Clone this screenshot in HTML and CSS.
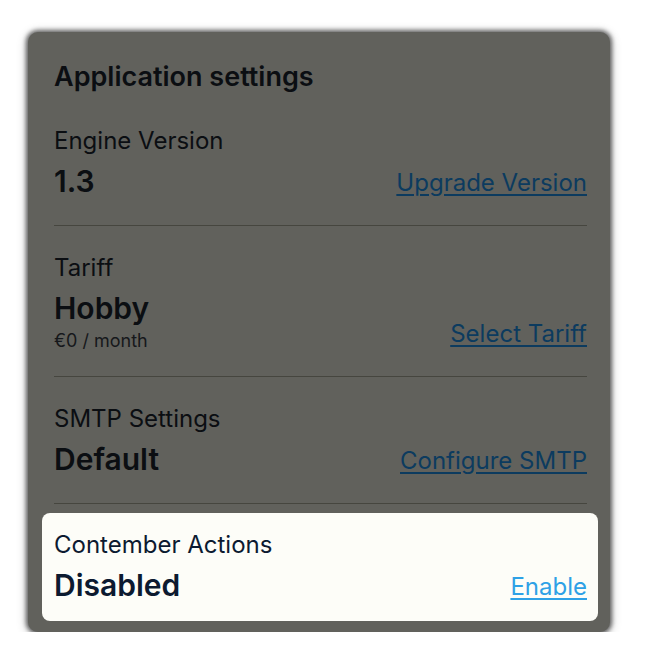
FILE: index.html
```html
<!DOCTYPE html>
<html lang="en">
<head>
<meta charset="utf-8">
<title>Application settings</title>
<link rel="stylesheet" href="styles.css">
</head>
<body>
<div class="card">
  <h2 class="title">Application settings</h2>
  <div class="section">
    <div class="info">
      <div class="label">Engine Version</div>
      <div class="value">1.3</div>
    </div>
    <a class="link" href="#">Upgrade Version</a>
  </div>
  <div class="section">
    <div class="info">
      <div class="label">Tariff</div>
      <div class="value">Hobby</div>
      <div class="sub">€0 / month</div>
    </div>
    <a class="link" href="#">Select Tariff</a>
  </div>
  <div class="section">
    <div class="info">
      <div class="label">SMTP Settings</div>
      <div class="value">Default</div>
    </div>
    <a class="link" href="#">Configure SMTP</a>
  </div>
  <div class="section last">
    <div class="highlight">
      <div class="info">
        <div class="label">Contember Actions</div>
        <div class="value">Disabled</div>
      </div>
      <a class="link" href="#">Enable</a>
    </div>
  </div>
</div>
</body>
</html>
```

FILE: styles.css
```css
* { box-sizing: border-box; }
body {
  margin: 0;
  background: #ffffff;
  font-family: Inter, "Noto Sans", sans-serif;
  color: #0b0e12;
}
.card {
  margin: 32px 0 0 28px;
  width: 582px;
  height: 600px;
  background: #61615c;
  border-radius: 10px;
  padding: 29px 23px 11px 26px;
  box-shadow: 0 0 4px 2px rgba(0, 0, 0, 0.55), 0 2px 12px rgba(0, 0, 0, 0.3);
}
.title {
  margin: 0 0 6px;
  font-size: 27px;
  line-height: 32px;
  font-weight: 600;
  color: #0b0e12;
}
.section {
  display: flex;
  justify-content: space-between;
  align-items: flex-end;
  padding: 29px 0 25px;
  border-bottom: 1px solid #46463f;
}
.section.last {
  border-bottom: none;
  padding: 9px 0 0;
  display: block;
}
.highlight {
  display: flex;
  justify-content: space-between;
  align-items: flex-end;
  margin: 0 -11px 0 -12px;
  padding: 19px 11px 17px 12px;
  background: #fdfdf8;
  border-radius: 8px;
  color: #0c1a30;
}
.label {
  font-size: 24px;
  line-height: 26px;
}
.value {
  margin-top: 8px;
  font-size: 30px;
  line-height: 38px;
  font-weight: 600;
}
.sub {
  margin-top: 4px;
  font-size: 18px;
  line-height: 20px;
  color: #16181b;
}
.link {
  font-size: 24px;
  line-height: 34px;
  color: #0c3b5f;
  text-decoration: underline;
  text-underline-offset: 3px;
  text-decoration-thickness: 2px;
}
.highlight .link {
  color: #2ea1e6;
}
```
